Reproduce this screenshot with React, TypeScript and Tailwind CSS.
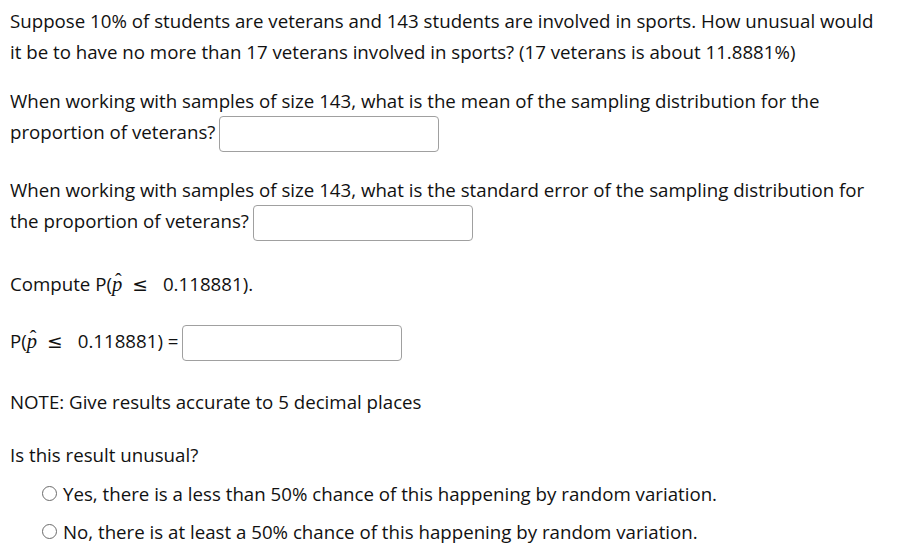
import React from 'react';

const Phat = () => (
  <span
    className="relative inline-block text-[1.1em] italic"
    style={{ fontFamily: '"Liberation Serif", "DejaVu Serif", serif' }}
  >
    p
    <span className="absolute left-[3px] top-[2px] text-[20px] leading-[20px] not-italic">ˆ</span>
  </span>
);

const Leq = () => (
  <span className="ml-[10px] mr-[15px] inline-block" style={{ fontFamily: '"DejaVu Sans", sans-serif' }}>
    ≤
  </span>
);

const AnswerBox = () => (
  <input
    type="text"
    className="ml-[4px] h-[36px] w-[220px] rounded-[4px] border border-[#a0a0a0] bg-white align-middle"
  />
);

const Radio = ({ label }: { label: string }) => (
  <label className="flex items-center gap-[6px]">
    <span className="inline-block h-[15px] w-[15px] rounded-full border border-[#6b6b6b] bg-white" />
    <span>{label}</span>
  </label>
);

export default function App() {
  return (
    <div
      className="pl-[10px] pr-[20px] pt-[5px] text-[18.7px] leading-[31px] text-[#111]"
      style={{ fontFamily: '"Open Sans", "Liberation Sans", sans-serif' }}
    >
      <p>
        Suppose 10% of students are veterans and 143 students are involved in sports. How unusual would it be to have no
        more than 17 veterans involved in sports? (17 veterans is about 11.8881%)
      </p>

      <p className="mt-[18px]">
        When working with samples of size 143, what is the mean of the sampling distribution for the proportion of
        veterans?
        <AnswerBox />
      </p>

      <p className="mt-[22px]">
        When working with samples of size 143, what is the standard error of the sampling distribution for the proportion
        of veterans?
        <AnswerBox />
      </p>

      <p className="mt-[27px]">
        Compute P(<Phat />
        <Leq />
        0.118881).
      </p>

      <p className="mt-[25px]">
        P(<Phat />
        <Leq />
        0.118881) =
        <AnswerBox />
      </p>

      <p className="mt-[25px]">NOTE: Give results accurate to 5 decimal places</p>

      <p className="mt-[22px]">Is this result unusual?</p>

      <div className="mt-[8px] flex flex-col gap-[7px] pl-[32px]">
        <Radio label="Yes, there is a less than 50% chance of this happening by random variation." />
        <Radio label="No, there is at least a 50% chance of this happening by random variation." />
      </div>
    </div>
  );
}
